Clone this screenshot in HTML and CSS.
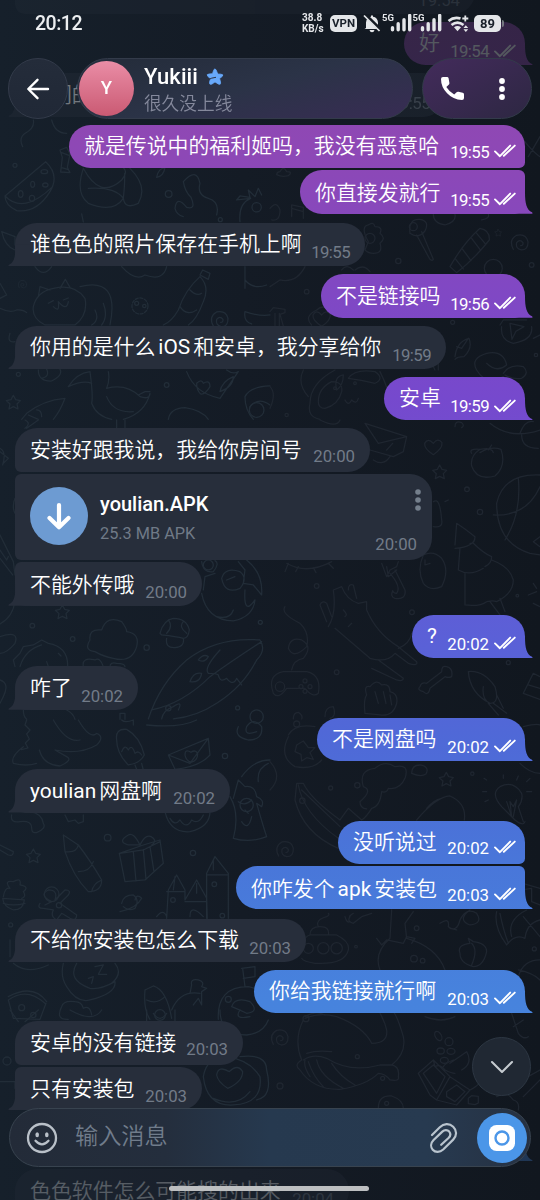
FILE: index.html
```html
<!DOCTYPE html>
<html lang="zh-CN">
<head>
<meta charset="utf-8">
<title>Yukiii</title>
<link rel="stylesheet" href="styles.css">
</head>
<body>
<div class="phone">
<svg class="wallpaper" width="540" height="1200" viewBox="0 0 540 1200" aria-hidden="true">
  <defs>
    <path id="star" d="M0-20 7-7 21-4 11 6 14 21 0 14-13 21-10 6-21-4-7-7Z"/>
    <path id="swirl" d="M-20 18Q-35-10-10-24Q18-30 24-5Q25 20 4 20Q-14 16-10-2Q0-14 9-2Q10 7 2 7"/>
    <path id="heart" d="M0 24Q-28 6-26-10Q-16-28 0-10Q14-28 26-12Q28 6 0 24Z"/>
    <path id="doublecheck" d="M1 7.4 5.9 12.2 16.2 1.6M9.8 11.8 20.8 1.6" fill="none" stroke="currentColor" stroke-width="1.9" stroke-linecap="round" stroke-linejoin="round"/>
  </defs>
  <g class="doodle-left" transform="translate(0 120) scale(.3333)">
    <path d="M100 0Q105 25 75 40Q55 55 68 80M155 0Q165 40 200 40M137 125Q180 165 150 215Q110 280 50 272Q15 255 15 228ZM15 228Q70 285 158 200M180 90l20-8 10 20-8 40 8 16-28-2 5-44zM185 98l22 8M185 143l18 5M250 145Q300 240 365 180Q385 155 370 143M250 145Q225 220 265 250Q340 280 370 235Q375 190 374 160M390 145Q445 200 415 250Q375 270 370 235M265 205Q345 200 370 235M470 172Q475 145 495 143M470 172Q490 170 495 143M550 185Q590 140 600 190Q590 225 625 235Q660 245 650 285M550 185Q555 215 573 232Q590 270 560 262Q530 225 525 265Q530 285 550 290M720 305Q715 250 752 235L710 240 720 228 750 232 745 210 765 230 775 205 785 225M245 282L250 306M5 335L45 350 45 375M5 335Q15 380 45 390M105 440Q130 475 155 440M365 440Q405 485 435 465Q490 485 500 440M100 560Q110 515 160 505Q225 490 255 535Q265 585 225 615H135Q95 595 100 560M115 530L120 500 150 510M180 505L196 478 210 502M240 500Q360 470 330 615M285 570Q300 600 275 615M310 550Q325 590 305 615M160 560Q180 580 175 545Q200 575 205 545M145 550l15-8M190 540l15-6M600 470Q555 510 535 570Q515 605 490 615M600 470Q630 500 610 545Q590 600 565 615M600 465l8-15 22 10-5 18zM570 510Q590 530 605 520M540 560Q560 590 590 570M735 440V505M735 480Q760 510 800 495M735 575Q780 590 810 585M735 575Q730 605 755 612M115 750Q115 785 155 783Q190 765 180 748M140 748Q150 770 125 775M205 800Q230 760 270 755M205 800Q250 780 275 790M270 755Q280 830 275 850Q290 890 335 898M325 755Q330 780 320 805Q380 790 420 830Q450 840 450 820Q435 880 370 898M320 830Q340 880 400 875M415 825l20-10 15 0M560 755Q585 820 660 835L715 755Q700 765 680 750M590 790q15-15 20 0q20-12 20 10q-15 25-28 22q-12-10-12-32M660 815q5-30 40-45q0 30-40 45M30 640Q20 670 45 665M65 898L80 880Q130 840 195 835Q180 875 160 898M85 885l30 13M110 870q15 0 15 20M505 898Q510 865 555 863Q605 870 625 898M735 830Q750 800 810 798M735 830Q735 870 760 898M750 860q25-30 60-5M0 490L20 525 0 535M0 565Q30 580 50 570Q70 568 80 578"/>
    <ellipse cx="133" cy="155" rx="10" ry="6"/><ellipse cx="98" cy="193" rx="6" ry="9"/><ellipse cx="136" cy="195" rx="8" ry="6"/><ellipse cx="62" cy="222" rx="7" ry="10"/><ellipse cx="96" cy="235" rx="8" ry="9"/>
    <circle cx="420" cy="558" r="24" stroke-dasharray="9 5"/><circle cx="410" cy="550" r="6"/><circle cx="433" cy="558" r="5"/>
    <circle cx="45" cy="136" r="6"/><circle cx="506" cy="222" r="10"/><circle cx="770" cy="262" r="14"/><circle cx="661" cy="299" r="6"/><circle cx="55" cy="763" r="6"/><circle cx="500" cy="795" r="7"/><circle cx="770" cy="870" r="22"/>
    <use href="#swirl" x="67" y="494" transform="translate(34 247) scale(.5)"/><use href="#swirl" x="660" y="600"/><use href="#star" x="40" y="846"/>
  </g>
  <g class="doodle-right" transform="translate(270 120) scale(.3333)">
    <path d="M30 155q10-20 20 0q20 0 5 12q-20 5-35-3q0-8 10-9M0 265Q20 240 30 270Q30 305 5 300M65 290V255L100 262V295M65 265l35 10M455 335L490 418Q485 425 478 415L440 345M490 283Q490 310 525 315Q560 305 555 283M635 300Q660 295 655 283M540 440Q580 370 630 325Q660 330 658 360Q610 420 560 458ZM555 415l25 32M578 388l25 34M605 355l26 35M620 340l25 30M285 390l10-25q-25-45 0-50q15-12 20 5q25 0 15 20q20 15 0 30q10 30-20 30q-15 0-25-10M250 450Q230 430 215 450M255 450Q280 430 300 455M0 500L30 480Q80 490 105 440M0 575l10-12 35 5 0 10-15 5 10 35M15 580v38M28 580v38M125 615Q100 590 140 570Q160 550 190 575M690 615L700 600H770M695 620Q690 660 730 670Q790 660 785 620M720 610l42 10-24 14-12 24zM555 710q5-45 42-55q12 30-15 55q-20 0-27 8M560 680l15 5 20-30M100 750Q80 790 115 830M195 750Q120 790 120 850Q110 890 150 898M200 810q-10-40 20-45q0 30-20 45M145 845q0-40 40-60q35 0 30 30q-10 40-50 50q-20 0-20-20M225 840q10 20 20 0q15 15 20-5M235 775q20-30 80-20q30 20 0 35q-40-10-80-15M330 755q30 60 30 95M0 800q20 20 0 65M620 750Q600 715 650 700Q700 690 710 735Q680 760 650 730M620 750Q650 800 700 770M700 760q20-30 60-20q20 20-5 35q-25 5-50-10M480 720l15 30M505 730V750M755 520Q770 560 760 570M790 655l20-10M775 110l35-60M735 25Q780 90 810 110M420 340q-5-45 30-42q30 5 15 35q-20 25-45 7"/>
    <circle cx="430" cy="320" r="12"/><circle cx="300" cy="355" r="15"/><circle cx="670" cy="445" r="27"/><circle cx="110" cy="515" r="7"/><circle cx="385" cy="423" r="8"/><circle cx="785" cy="435" r="7"/><circle cx="50" cy="885" r="5"/><circle cx="798" cy="705" r="5"/><circle cx="548" cy="607" r="6"/><circle cx="195" cy="805" r="4"/><circle cx="255" cy="790" r="4"/>
    <use href="#swirl" x="750" y="370"/><use href="#heart" x="155" y="595"/><use href="#star" x="685" y="338" transform="translate(342 169) scale(.5)"/>
  </g>
  <g class="doodle-left" transform="translate(0 420) scale(.3333)">
    <path d="M75 0Q95 10 75 25M80 25L115 0M350 0V25M375 0V25M0 85Q20 95 8 135M0 95l25 20-15 15M0 345L40 425 45 465M0 390l20 30 5-10M0 415l38 50M45 540Q40 590 0 612M0 650Q60 630 45 670Q20 700 0 700M605 425Q610 460 640 455Q660 430 645 422M740 420Q790 460 785 525L760 495 730 490 735 450 715 425M605 520Q620 600 700 603Q760 590 765 540Q730 590 735 510M650 590Q690 600 700 570M610 510l5-40 30-10M665 475q10-35 55-20q25 20 0 50q-45 20-55-30M680 480l25-10M270 660Q265 625 305 630Q320 585 365 605Q380 625 380 635Q420 640 410 680Q395 730 340 715Q310 710 285 695Q250 690 270 660M250 740Q245 710 285 720Q300 710 310 740M330 740q0-15 20-10q25 0 25 10M45 740L40 720 60 700 70 680 100 675 125 660 145 670Q205 680 203 740M60 740Q75 690 125 675M480 640Q490 600 520 595Q560 595 568 630Q565 655 550 655Q530 650 485 645ZM500 655Q495 685 525 683Q555 680 550 655M505 600Q520 620 500 640M550 605Q535 620 560 640M445 897Q480 790 560 720Q650 650 780 660Q800 690 770 720Q730 800 650 850Q590 890 520 897M455 870Q550 850 630 770Q700 720 785 665M660 690Q610 745 625 760Q650 760 655 765Q660 790 680 775Q700 800 710 775L725 795M485 897Q490 870 520 860Q550 840 535 870M570 785q10-30 35-25q-5 30-35 25M595 720q15-20 30-10q-10 20-30 10M0 780Q30 790 10 830L0 850M70 870Q70 890 80 898M200 870Q220 880 225 898M360 898V880H375V898M45 280Q35 260 45 235M140 725l5 15M175 700l8 8"/>
    <circle cx="505" cy="865" r="8"/><circle cx="625" cy="435" r="15"/><circle cx="97" cy="617" r="7"/><circle cx="218" cy="657" r="7"/><circle cx="440" cy="683" r="8"/><circle cx="781" cy="607" r="6"/><circle cx="713" cy="864" r="6"/><circle cx="770" cy="890" r="20"/><use href="#star" x="187" y="575"/>
  </g>
  <g class="doodle-right" transform="translate(270 420) scale(.3333)">
    <path d="M285 10L410 50 400 95 370 110 300 90M285 10l40 60 85-20M350 90l18-20M310 120Q340 140 360 110M150 0Q200 25 210 0M605 100q-10-15 25-12q35-8 40 10M630 88q-30 20-25 50q15 45 70 30q35-30 18-80q-30-10-63 10M655 90l10-15M555 20q0-20 20-12q10 10 0 15M660 10Q720 60 810 30M755 45q0 40 50 40M750 40q15-40 40-35M810 165Q700 160 680 250Q680 370 780 400L810 405M745 175Q755 280 705 360M670 285Q770 290 810 200M810 350l-20 15 20 15M490 245Q510 230 515 300Q520 325 490 320M525 245l10-5M50 430Q110 465 185 425M55 430l-10 25M85 440l-8 15M130 443l8 15M175 430l15 15M335 430l15 40 10-20 20-10 5-15M350 440l5 30 25-20M360 460Q395 500 380 520Q370 520 368 512Q360 530 375 535Q410 540 405 510L375 450M460 405Q440 450 460 490Q480 515 515 500Q540 450 515 415Q490 390 460 405M465 420l0 15 15-5M555 375L560 310Q590 330 615 350Q615 380 555 385M615 350q0 20-15 20M570 385L565 450Q600 470 640 445M610 370Q640 400 665 410Q665 430 645 440M585 460V555Q630 560 650 545Q670 540 680 545Q730 520 730 480Q720 440 665 420M660 545l30 40M690 535l15 40M175 620Q200 580 190 510L215 500Q230 540 265 550L290 545 290 570Q320 640 385 680L440 725Q445 740 415 730L375 700Q350 730 300 715L195 625M170 605l-20-50Q155 540 170 550L185 590M235 510q0-20 15-15l10 40M325 720l75 55q0 10-20 5l-75-35M385 685Q420 670 425 640M65 750Q70 720 100 715Q130 680 95 660Q60 650 55 685Q70 720 110 680Q120 640 90 610Q30 580 45 560M10 820Q-10 765 40 755H110Q155 765 145 820Q130 835 105 805H50Q25 840 10 820M285 880Q280 840 290 825Q280 795 300 800Q320 775 335 795Q360 790 360 815Q385 820 380 850Q370 890 330 885ZM315 815l10 35M340 815l8 35M360 825l5 30M450 800q5-15 20-10l45-35q0-20 15-15q20 5 15 30q-10 5-20 0l-45 35q-5 25-20 10q-20-5-10-15M595 755Q640 750 675 800Q690 850 660 850Q600 820 595 755M640 800Q635 840 660 850M670 850l40 30M655 850l30 35M680 825l20 40M760 820l30-60 20 10M760 820l50 18M775 795l35 10M70 897q0-20 15-20q15 10 10 20M165 890q0-30 25-30q10 30-10 35M775 525l25-10M790 550l20 10M790 490l10 15M220 570q15 15 5 20M245 610l-10 10"/>
    <circle cx="30" cy="800" r="14"/><circle cx="105" cy="783" r="6"/><circle cx="93" cy="800" r="6"/><circle cx="120" cy="800" r="6"/><circle cx="105" cy="814" r="6"/><circle cx="591" cy="208" r="7"/><circle cx="630" cy="276" r="8"/><circle cx="140" cy="498" r="7"/><circle cx="426" cy="577" r="7"/><circle cx="742" cy="527" r="4"/><circle cx="200" cy="757" r="7"/><circle cx="715" cy="728" r="6"/>
    <use href="#heart" x="490" y="80"/><use href="#star" x="509" y="155"/>
  </g>
  <g class="doodle-left" transform="translate(0 720) scale(.3333)">
    <path d="M80 0l-5 15 15 15-10 12 8 15-12 12 8 15-20 5M70 80Q30 110 40 130Q80 140 110 130M118 90Q130 135 180 138Q220 120 200 110L165 90Q240 105 290 75Q315 50 290 40Q270 60 235 0M160 0Q200 70 240 60M350 60Q345 25 380 28Q420 50 433 105Q420 130 385 135Q350 100 350 60M365 95q10-25 20-5q10-20 20 10q10-10 20 5M405 135l8 20M425 130l5 20M505 105L625 55 630 105Q600 140 525 148ZM505 105L570 130 625 55M555 105q0-20 18-8q15-10 20 5q0 20-20 25q-15-5-18-22M365 0q10 10 35 0v15M440 15Q540 25 590 0M715 20Q700 50 745 60Q790 60 785 20Q760-10 740 20Q730 50 770 35M725 170Q760 120 810 120M775 185q-5-40 30-55M700 235L715 180 735 200Q765 195 770 230Q795 240 785 260L770 250Q790 320 800 350Q750 370 700 355Q720 280 690 230M715 245q20 15 40-5M735 270l10 10M725 305q20 30 30-15M35 285Q30 310 60 305Q95 300 95 325Q95 340 110 338Q140 325 130 310Q125 280 90 275M195 285l10 20 20-5 10 10 15-5v-20M495 275Q510 340 570 335Q630 320 630 275M510 295q15 25 30 5q20 30 35 0q20 15 35-15M190 345L235 375Q270 420 305 480Q305 515 265 515Q220 470 195 395ZM195 395Q230 400 235 375M235 455Q270 455 280 425M275 515Q280 490 305 480M358 400L375 485 435 480 490 430 480 360 430 375ZM360 400L430 390 480 365M400 395l8 88M430 388l8 90M450 380l12 75M420 375q-20-40-35-30q-35 20 0 30zM420 375q20-40 40-20q10 10-5 20M0 375L40 395Q40 410 25 405L0 390M10 530Q15 500 30 505Q10 480 40 485Q65 470 60 495Q90 500 70 515Q80 530 65 535M8 535l65 5Q70 570 40 570Q10 560 8 535M10 550q30 10 65 0M135 555l20-10q-40-20-10-35q30 0 20 30l30-30q20 0 10 15l-25 25 50 35q0 20-20 10l-25-15-15 20q-20-10-10-30l-30-5q-20 0-10-15M365 550q5-25 35-25q20 15 5 40q-20 10-35-5M360 575q50-10 65-40q-15-15-20 5M500 595L505 510 530 465 555 510V540H555L590 480 620 535 622 595M500 515h55M555 545h65M620 595V460L645 410 685 460V595M620 465H685M570 590q0-40 40 0M470 590q20-25 30 0M525 470l-5 40M590 490v30M640 420v30M40 730Q80 765 145 735M30 660l0 50M190 730Q180 770 200 800Q230 850 270 840Q350 820 345 785Q300 810 270 805Q200 780 230 730M285 740l25-5-15 28 25 0M265 775l15-5-5 20M345 730Q370 760 335 790M185 860q5-20 40-15q20 0 25 20q20-10 25 20M185 860q-20 40 20 38M25 830Q100 790 140 845M25 840L40 895 120 898 138 850M25 840Q80 800 135 850M435 810L460 798Q500 810 515 895M435 810Q430 870 450 898M440 840q30 15 55-10M515 870Q540 810 600 820M570 820l5-25q-5-20 20-15q20 5 10 20l15 5-15 10 0 40-10-20-15 20M655 898Q650 800 745 800Q790 810 810 840M725 745L765 740V770L730 775M728 745L735 800M695 860q10-30 55-15q30 30-10 35q-20-10-45-20"/>
    <circle cx="740" cy="255" r="20"/><circle cx="155" cy="523" r="22"/><circle cx="177" cy="556" r="8"/><circle cx="323" cy="353" r="10"/><circle cx="675" cy="108" r="8"/><circle cx="579" cy="399" r="8"/><circle cx="519" cy="540" r="7"/><circle cx="643" cy="493" r="7"/><circle cx="667" cy="587" r="7"/><circle cx="32" cy="615" r="6"/><circle cx="480" cy="885" r="16"/><circle cx="685" cy="838" r="9"/><circle cx="65" cy="863" r="9"/><circle cx="100" cy="885" r="8"/>
    <use href="#star" x="100" y="407"/>
  </g>
  <g class="doodle-right" transform="translate(270 720) scale(.3333)">
    <path d="M0 125Q40 170 0 210M55 50Q25 110 75 140Q130 150 155 120M55 45Q75 10 135 20M80 75l20-12 15 20 20 0-15 15 10 20-20-5-15 10-2-20-18-8zM205 385Q100 340 75 240L80 190 100 190Q120 235 210 300L235 265 275 300M95 210L210 320M85 195Q100 280 205 355M270 245Q310 210 280 200Q265 150 315 145Q345 120 375 140Q420 130 405 175Q390 210 355 205Q350 220 335 215Q330 260 305 265Q290 290 275 300M270 245q0 20 20 22M425 160q0-25 25-25q30 5 18 27q-15 10-43-2M440 300Q500 230 540 228Q590 250 583 300M515 235Q490 240 470 265M735 300L695 260Q660 220 690 200Q730 180 755 220Q760 240 745 260L760 305M710 245l15 45-5-45 10 15 10-20-10 50M770 185l10-10M770 215h15M650 180l-8-5M650 215h-12M655 240l-10 5M700 175v-10M740 180l5-12M735 300q25 20 30 5M760 20Q800 10 810 15M750 130Q780 160 810 160M105 660q0-10 15-15h80q40 20 35 45q-10 45-100 40q-35-5-40-15M120 645q0-25 30-25q30 0 25 25M145 620q-10-20 25-30q10-5 5-10M250 580q-15 10-10 10q-10 15 10 20l25-20 30-10M225 590q5 20 15 15M365 570L360 655Q310 700 330 750M430 575L405 610 410 655Q500 680 525 750M320 655L335 675 350 660 400 670 410 650 435 655 425 670M510 610Q540 590 535 620Q560 640 570 600Q590 560 620 580Q640 610 600 615Q560 600 600 570M540 625l20 5M570 700Q560 675 600 670L595 655 610 665Q650 670 650 695Q640 740 610 740Q570 730 570 700M605 670q20 20 0 65M680 575Q670 620 710 675Q735 640 765 655Q770 610 810 600M690 580Q700 630 715 670M770 570Q710 600 725 650M760 590L810 650M740 485l70 20M745 770Q760 720 810 720M745 750Q790 760 810 780M105 890q30-20 60-5M755 490v20l30-5v40l25 10"/>
    <circle cx="115" cy="685" r="15"/><circle cx="160" cy="685" r="17"/><circle cx="200" cy="685" r="17"/><circle cx="80" cy="12" r="9"/><circle cx="262" cy="196" r="8"/><circle cx="182" cy="204" r="6"/><circle cx="97" cy="242" r="8"/><circle cx="607" cy="161" r="5"/><circle cx="432" cy="716" r="10"/><circle cx="440" cy="625" r="7"/><circle cx="458" cy="722" r="7"/><circle cx="258" cy="680" r="4"/><circle cx="793" cy="687" r="6"/>
    <use href="#star" x="529" y="177"/><use href="#swirl" x="46" y="390"/>
  </g>
  <g class="doodle-left" transform="translate(0 1010) scale(.3333)">
    <path d="M30 0L55 35M75 35L115 0M210 0Q280 40 305 0M440 0v35M525 0v35M460 10q20 30 40 0M660 0Q660 75 740 75Q790 70 805 30M720 0q-20 30 30 20M610 200Q620 140 680 140Q750 150 780 200Q790 280 700 285Q620 290 610 200M720 140Q800 130 800 180Q820 260 770 270M640 265q70 30 110-20M650 195q5-30 38-10q25-25 40 0q0 30-45 50q-30-20-33-40M0 215H45V235"/><circle cx="21" cy="153" r="12"/>
  </g>
  <g class="doodle-right" transform="translate(270 1010) scale(.3333)">
    <path d="M100 30Q70 90 95 150Q70 165 90 180Q130 240 210 238Q290 225 325 190Q345 190 360 210Q390 215 385 200Q390 170 365 165Q410 130 400 80Q380 10 365 0M105 25Q150 5 200 20Q280 50 305 100Q355 100 350 60Q345 35 325 0M100 150Q130 130 170 145Q240 190 330 165L365 165M115 155Q130 200 160 230M140 150Q150 200 220 235M185 160Q210 200 255 225M105 150Q100 170 120 200M110 130Q140 120 185 125M445 190L490 150 540 200 500 270 480 255ZM460 190L490 165 525 200 500 250ZM540 200L600 240 560 285 500 270M530 245l30-20 25 20-30 30-25-15ZM540 160L590 125Q610 160 575 180M600 240Q640 220 620 210M325 295Q325 255 365 258Q400 270 400 295M465 20q50 20 90 0M725 10l20 60q15 20 30 10M730 50l30-20M680 260q30-20 50 10q20 5 15 30M720 230L810 180M760 260l50-50M595 265l10-8 20 2 0 20-10 5-20-3zM520 170q5-10 30-20M490 150l5 20q15-10 30 10q20 10 30 10"/>
    <ellipse cx="505" cy="78" rx="15" ry="9" transform="rotate(60 505 78)"/><circle cx="537" cy="95" r="12"/><ellipse cx="512" cy="123" rx="11" ry="9"/><ellipse cx="543" cy="124" rx="12" ry="9"/><ellipse cx="523" cy="151" rx="12" ry="9"/><circle cx="30" cy="228" r="9"/><circle cx="262" cy="140" r="6"/><circle cx="338" cy="205" r="6"/><circle cx="108" cy="26" r="9"/><circle cx="350" cy="280" r="6"/>
    <use href="#swirl" x="30" y="85"/>
  </g>
</svg>

<main class="chat">
  <div class="row in above"><div class="bubble single"><span class="time">19:54</span></div></div>
  <div class="row out faded"><div class="bubble single w121"><span class="text">好</span><span class="time t19">19:54</span><svg class="ticks" viewBox="0 0 22 14"><use href="#doublecheck"/></svg><i class="tail"></i></div></div>
  <div class="row in faded dim"><div class="bubble single w430"><span class="text">你们的</span><span class="time t19">19:55</span><i class="tail"></i></div></div>
  <div class="row out"><div class="bubble first w456"><span class="text">就是传说中的福利姬吗，我没有恶意哈</span><span class="time t19">19:55</span><svg class="ticks" viewBox="0 0 22 14"><use href="#doublecheck"/></svg></div></div>
  <div class="row out joined"><div class="bubble last w225"><span class="text">你直接发就行</span><span class="time t19">19:55</span><svg class="ticks" viewBox="0 0 22 14"><use href="#doublecheck"/></svg><i class="tail"></i></div></div>
  <div class="row in spaced"><div class="bubble single w350"><span class="text">谁色色的照片保存在手机上啊</span><span class="time t19">19:55</span><i class="tail"></i></div></div>
  <div class="row out"><div class="bubble single w204"><span class="text">不是链接吗</span><span class="time t19">19:56</span><svg class="ticks" viewBox="0 0 22 14"><use href="#doublecheck"/></svg><i class="tail"></i></div></div>
  <div class="row in"><div class="bubble single w431"><span class="text">你用的是什么<span class="latin">iOS</span>和安卓，我分享给你</span><span class="time t19">19:59</span><i class="tail"></i></div></div>
  <div class="row out"><div class="bubble single w141"><span class="text">安卓</span><span class="time t19">19:59</span><svg class="ticks" viewBox="0 0 22 14"><use href="#doublecheck"/></svg><i class="tail"></i></div></div>
  <div class="row in"><div class="bubble first w355"><span class="text">安装好跟我说，我给你房间号</span><span class="time">20:00</span></div></div>
  <div class="row in joined"><div class="bubble file">
    <svg class="download" viewBox="0 0 58 58"><circle cx="29" cy="29" r="29" fill="#6d9bd2"/><path d="M29 18V40M19.5 31 29 40.3 38.5 31" fill="none" stroke="#fff" stroke-width="4.2" stroke-linecap="round" stroke-linejoin="round"/></svg>
    <div class="file-info"><div class="file-name">youlian.APK</div><div class="file-size">25.3 MB APK</div></div>
    <div class="file-side"><svg class="file-dots" viewBox="0 0 6 22"><circle cx="3" cy="3" r="2.8"/><circle cx="3" cy="11" r="2.8"/><circle cx="3" cy="19" r="2.8"/></svg><span class="time">20:00</span></div>
  </div></div>
  <div class="row in joined"><div class="bubble last w187"><span class="text">不能外传哦</span><span class="time">20:00</span><i class="tail"></i></div></div>
  <div class="row out spaced"><div class="bubble single w113"><span class="text"><span class="latin flush">?</span></span><span class="time">20:02</span><svg class="ticks" viewBox="0 0 22 14"><use href="#doublecheck"/></svg><i class="tail"></i></div></div>
  <div class="row in"><div class="bubble single w123"><span class="text">咋了</span><span class="time">20:02</span><i class="tail"></i></div></div>
  <div class="row out"><div class="bubble single w208"><span class="text">不是网盘吗</span><span class="time">20:02</span><svg class="ticks" viewBox="0 0 22 14"><use href="#doublecheck"/></svg><i class="tail"></i></div></div>
  <div class="row in"><div class="bubble single w215"><span class="text"><span class="latin flush">youlian</span>网盘啊</span><span class="time">20:02</span><i class="tail"></i></div></div>
  <div class="row out"><div class="bubble first w187"><span class="text">没听说过</span><span class="time">20:02</span><svg class="ticks" viewBox="0 0 22 14"><use href="#doublecheck"/></svg></div></div>
  <div class="row out joined"><div class="bubble last w289"><span class="text">你咋发个<span class="latin">apk</span>安装包</span><span class="time">20:03</span><svg class="ticks" viewBox="0 0 22 14"><use href="#doublecheck"/></svg><i class="tail"></i></div></div>
  <div class="row in spaced"><div class="bubble single w291"><span class="text">不给你安装包怎么下载</span><span class="time">20:03</span><i class="tail"></i></div></div>
  <div class="row out"><div class="bubble single w271"><span class="text">你给我链接就行啊</span><span class="time">20:03</span><svg class="ticks" viewBox="0 0 22 14"><use href="#doublecheck"/></svg><i class="tail"></i></div></div>
  <div class="row in"><div class="bubble first w228"><span class="text">安卓的没有链接</span><span class="time">20:03</span></div></div>
  <div class="row in joined"><div class="bubble last w187"><span class="text">只有安装包</span><span class="time">20:03</span><i class="tail"></i></div></div>
  <div class="row out faded"><div class="bubble single w330"><i class="tail"></i></div></div>
  <div class="row in faded"><div class="bubble single w334"><span class="text">色色软件怎么可能搜的出来</span><span class="time">20:04</span></div></div>
</main>

<div class="top">
  <div class="status">
    <span class="clock">20:12</span>
    <div class="status-icons">
      <div class="speed"><span>38.8</span><span>KB/s</span></div>
      <span class="vpn">VPN</span>
      <svg width="18" height="19" viewBox="0 0 18 19"><path d="M3 14V8.5Q3.500 3.300 8 2.800V1.400H10V2.800Q14.500 3.300 15 8.500V13L16.500 15H1.500ZM6.500 16H11.500Q11 18.200 9 18.200T6.500 16" fill="#e4e6e9"/><path d="M2.200 .8 18 16.300" stroke="#151b23" stroke-width="3.600"/><path d="M1 1.500 16.500 17" stroke="#e4e6e9" stroke-width="1.700"/></svg>
      <div class="signal"><span>5G</span><svg width="22" height="18" viewBox="0 0 22 18"><path d="M2.500 15.800V13.800M8.200 15.800V9.800M14 15.800V5.800M19.700 15.800V1.500" stroke="#e4e6e9" stroke-width="3.400" stroke-linecap="round"/></svg></div>
      <div class="signal"><span>5G</span><svg width="22" height="18" viewBox="0 0 22 18"><path d="M2.500 15.800V13.800M8.200 15.800V9.800M14 15.800V5.800M19.700 15.800V1.500" stroke="#e4e6e9" stroke-width="3.400" stroke-linecap="round"/></svg></div>
      <svg class="wifi" width="22" height="19" viewBox="0 0 22 19"><path d="M1.500 7Q7 2.400 13.500 4.500M4.500 11Q10.500 6.200 16.500 11" fill="none" stroke="#e4e6e9" stroke-width="2.600"/><path d="M7 13.300Q10.500 10.500 14 13.300L10.500 17.300ZM16.500 14 18.800 11.300 21.200 14ZM16.500 15.300 18.800 18 21.200 15.300Z" fill="#e4e6e9"/><path d="M18.300 1.500V7.500M15.300 4.500H21.300" stroke="#e4e6e9" stroke-width="1.800"/></svg>
      <span class="battery">89</span>
    </div>
  </div>
  <header class="header">
    <div class="glass back"><svg width="24" height="24" viewBox="0 0 24 24"><path d="M22 12H2.500M11.500 2.800 2.300 12 11.500 21.200" fill="none" stroke="#fff" stroke-width="2.400" stroke-linecap="round" stroke-linejoin="round"/></svg></div>
    <div class="glass title">
      <div class="avatar">Y</div>
      <div class="names">
        <div class="name">Yukiii<svg width="18" height="18" viewBox="0 0 18 18"><path d="M8.800 1Q10 1 10.700 3.300L11.700 6 15 6.200Q18.200 6.500 16 8.600L13.600 10.500 14.500 14Q15.100 17.300 12.300 16L9 13.900 6 16Q3 17.200 3.600 14.100L4.500 10.700 2 8.500Q-.1 6.300 3 6L6.500 5.700 7.500 2.700Q8 1 8.800 1Z" fill="#67a8fa" stroke="#67a8fa" stroke-width=".8"/><path d="M2 11.800Q5.500 9.700 10 9.300" fill="none" stroke="#2a3144" stroke-width="1"/></svg></div>
        <div class="seen">很久没上线</div>
      </div>
    </div>
    <div class="glass actions">
      <svg width="25" height="25" viewBox="0 0 25 25"><path d="M3 1H7Q8.300 1 8.600 2.300L9.400 7Q9.500 8 8.700 8.800L6.300 11Q9.500 16 14.200 18.600L16.600 16.300Q17.400 15.500 18.400 15.800L22.700 16.700Q24 17.100 24 18.400V22Q24 24 22 24Q13 23.600 7.100 17.300Q1 11 1 3Q1 1 3 1Z" fill="#fff"/></svg>
      <svg width="6" height="22" viewBox="0 0 6 22"><g fill="#fff"><circle cx="3" cy="3" r="2.900"/><circle cx="3" cy="11" r="2.900"/><circle cx="3" cy="19" r="2.900"/></g></svg>
    </div>
  </header>
</div>

<div class="bottom">
  <div class="scroll-down"><svg width="24" height="14" viewBox="0 0 24 14"><path d="M2 2 12 12 22 2" fill="none" stroke="#c5cbd0" stroke-width="2.100" stroke-linecap="round" stroke-linejoin="round"/></svg></div>
  <div class="composer">
    <svg class="smile" width="32" height="32" viewBox="0 0 32 32"><circle cx="16" cy="16" r="14" fill="none" stroke="#b9c0c8" stroke-width="2.300"/><path d="M9.500 18.800Q16 25.800 22.500 18.800" fill="none" stroke="#b9c0c8" stroke-width="2.300" stroke-linecap="round"/><g fill="#b9c0c8"><ellipse cx="11.200" cy="12.800" rx="1.800" ry="2.500"/><ellipse cx="20.800" cy="12.800" rx="1.800" ry="2.500"/></g></svg>
    <span class="placeholder">输入消息</span>
    <svg class="clip" width="28" height="32" viewBox="0 0 28 32"><path d="M2 13 9.800 5.300C13.800 1.300 19.300 1 23.200 4.700C27.200 8.600 26.800 14 23.200 17.600L13.200 27.500C9.800 30.700 5.200 30.500 2.700 27.700C.3 24.900 .8 20.800 3.600 18L12.300 9.600C14.600 7.500 17.500 7.700 19.200 9.600C20.800 11.500 20.500 14 18.500 16L11.200 22.800" fill="none" stroke="#b9c4ce" stroke-width="2.200" stroke-linecap="round"/></svg>
    <svg class="camera" width="50" height="50" viewBox="0 0 50 50"><circle cx="25" cy="25" r="25" fill="#4b96e8"/><rect x="12" y="12" width="26" height="26" rx="7.500" fill="#fff"/><circle cx="25" cy="25" r="6.500" fill="none" stroke="#4b96e8" stroke-width="2.400"/></svg>
  </div>
  <div class="home"></div>
</div>
</div>
</body>
</html>
```
FILE: styles.css
```css
* { box-sizing: border-box; }
body {
  margin: 0;
  font-family: Roboto, "Noto Sans CJK SC", sans-serif;
  color: #fff;
}
.phone {
  position: relative;
  width: 540px;
  height: 1200px;
  overflow: hidden;
  background: linear-gradient(90deg, #16202b 0%, #141b25 45%, #11171f 100%);
}
.wallpaper { position: absolute; left: 0; top: 0; }
.wallpaper g { fill: none; stroke-width: 3.800; stroke-linecap: round; stroke-linejoin: round; }
.doodle-left { stroke: #222d38; }
.doodle-right { stroke: #1f2630; }

/* messages */
.chat {
  position: relative;
  display: flex;
  flex-direction: column;
  gap: 8px;
  margin-top: -29.300px;
}
.row { display: flex; padding: 0 15px; }
.out { justify-content: flex-end; }
.joined { margin-top: -6px; }
.spaced { margin-top: 1.200px; }
.faded { opacity: .28; }
.dim { opacity: .4; }
.above { opacity: .25; }
.above .bubble { width: 460px; justify-content: flex-end; }
.bubble {
  position: relative;
  display: flex;
  align-items: flex-start;
  height: 43.400px;
  padding: 0 14px 0 15px;
  border-radius: 22px;
  background: #272e3b;
  white-space: nowrap;
}
.out .bubble, .out .tail {
  background: linear-gradient(180deg, #9447ad 0, #8e48b5 145px, #8048c4 296px, #7649cd 398px, #5b60d7 637px, #4f69d7 740px, #4976d9 860px, #4783dd 1000px, #4688df 1200px) fixed;
}
.out .bubble { padding-right: 9px; }
.in .single { border-bottom-left-radius: 10px; }
.out .single { border-bottom-right-radius: 10px; }
.in .first { border-bottom-left-radius: 6px; }
.out .first { border-bottom-right-radius: 6px; }
.in .last { border-top-left-radius: 6px; border-bottom-left-radius: 10px; }
.out .last { border-top-right-radius: 6px; border-bottom-right-radius: 10px; }
.tail {
  position: absolute;
  right: -8px;
  bottom: 0;
  width: 22px;
  height: 22px;
  clip-path: path("M0 0H14C14 12 15.500 18 21 20.500Q22.500 22 20 22H0Z");
}
.in .tail {
  right: auto;
  left: -7px;
  background: #272e3b;
  clip-path: path("M22 0H7.500C7.500 12 6.500 18 1 20.500Q-.5 22 2 22H22Z");
}
.text {
  position: relative;
  z-index: 1;
  margin-top: 6.400px;
  font-size: 20.900px;
  font-weight: 350;
  line-height: 30px;
}
.last .text { margin-top: 7.800px; }
.latin { margin: 0 3px; font-weight: 400; }
.flush { margin-left: 0; }
.time {
  position: relative;
  z-index: 1;
  margin: 19.300px 0 0 auto;
  font-size: 16.800px;
  font-weight: 400;
  line-height: 20px;
  color: #727b88;
}
.first .time { margin-top: 17.300px; }
.out .time { color: #fff; }
.in .time { left: -1px; }
.t19 { letter-spacing: -.6px; }
.ticks {
  position: relative;
  z-index: 1;
  flex: none;
  width: 22px;
  height: 14px;
  margin: 21.500px 0 0 5px;
  color: #fff;
}
.first .ticks { margin-top: 19.500px; }
.w113 { width: 113px; }
.w121 { width: 121px; }
.w123 { width: 123px; }
.w141 { width: 141px; }
.w187 { width: 187px; }
.w204 { width: 204px; }
.w208 { width: 208px; }
.w215 { width: 215px; }
.w225 { width: 225px; }
.w228 { width: 228px; }
.w271 { width: 271px; }
.w289 { width: 289px; }
.w291 { width: 291px; }
.w330 { width: 330px; }
.w334 { width: 334px; }
.w350 { width: 350px; }
.w355 { width: 355px; }
.w430 { width: 430px; }
.w431 { width: 431px; }
.w456 { width: 456px; }

.file {
  width: 417px;
  height: 86.600px;
  padding: 13px 10px 0 15px;
  border-radius: 6px 22px 22px 6px;
}
.download { width: 58px; height: 58px; }
.file-info { margin-left: 12px; }
.file-name { margin-top: 4px; font-size: 20px; font-weight: 500; line-height: 26px; }
.file-size { margin-top: 7px; font-size: 16.300px; line-height: 20px; color: #707a87; }
.file-side {
  display: flex;
  flex-direction: column;
  align-items: flex-end;
  margin-left: auto;
}
.file-dots { width: 6px; height: 22px; margin: 2px 1px 0 0; fill: #747f8c; }
.file .time { left: 0; margin: 23.500px 5px 0 0; }

/* status bar and header */
.top {
  position: absolute;
  left: 0;
  top: 0;
  width: 540px;
  height: 119px;
}
.status {
  display: flex;
  justify-content: space-between;
  align-items: center;
  height: 46px;
  padding: 0 39px 0 35px;
}
.clock { font-size: 19.500px; font-weight: 500; letter-spacing: -.5px; color: #eceef0; }
.status-icons { display: flex; align-items: center; color: #e4e6e9; }
.speed {
  display: flex;
  flex-direction: column;
  width: 22px;
  margin-right: 6px;
  font-size: 10px;
  font-weight: 700;
  line-height: 11px;
}
.vpn {
  width: 27px;
  height: 17px;
  margin-right: 6px;
  border-radius: 5px;
  background: #e4e6e9;
  color: #19202a;
  font-size: 11.500px;
  font-weight: 700;
  line-height: 17px;
  text-align: center;
}
.signal { position: relative; height: 18px; padding-left: 7.500px; margin-left: 1px; }
.signal svg { display: block; }
.signal span {
  position: absolute;
  left: 0;
  top: -1px;
  font-size: 9.500px;
  font-weight: 700;
  line-height: 10px;
}
.wifi { margin: 0 5px 0 5px; }
.battery {
  position: relative;
  width: 27px;
  height: 17px;
  border-radius: 5px;
  background: #e4e6e9;
  color: #19202a;
  font-size: 13px;
  font-weight: 700;
  line-height: 17px;
  text-align: center;
}
.battery::after {
  content: "";
  position: absolute;
  right: -3px;
  top: 5px;
  width: 2px;
  height: 7px;
  border-radius: 0 2px 2px 0;
  background: #747780;
}
.header { display: flex; gap: 9px; margin-top: 12px; padding: 0 8px; }
.glass {
  display: flex;
  align-items: center;
  height: 61px;
  border: 1px solid #333b4a;
  border-radius: 31px;
}
.back { width: 60px; justify-content: center; background: linear-gradient(#242c3a, #202836); }
.title {
  width: 337px;
  background: linear-gradient(165deg, #252d3c 10%, #2b3347 50%, #382c54 100%);
}
.avatar {
  width: 55px;
  height: 55px;
  margin-left: 1px;
  border-radius: 50%;
  background: linear-gradient(#ea8da6, #ca5a73);
  font-size: 18.500px;
  font-weight: 500;
  line-height: 55px;
  text-align: center;
}
.names { margin: 2px 0 0 10px; }
.name {
  display: flex;
  align-items: center;
  gap: 8px;
  font-size: 22px;
  font-weight: 500;
  letter-spacing: .1px;
  line-height: 28px;
}
.seen { font-size: 17.700px; font-weight: 350; line-height: 26px; color: #85899c; }
.actions {
  width: 110px;
  justify-content: space-between;
  padding: 0 26px 0 17px;
  background: linear-gradient(150deg, #432b5b, #38294f 50%, #2d2742);
}

/* composer */
.bottom {
  position: absolute;
  left: 0;
  bottom: 0;
  width: 540px;
  display: flex;
  flex-direction: column;
}
.scroll-down {
  display: flex;
  align-items: center;
  justify-content: center;
  width: 59px;
  height: 59px;
  margin: 0 9px 12px auto;
  border: 1px solid #2d3743;
  border-radius: 50%;
  background: #202833;
}
.composer {
  display: flex;
  align-items: center;
  height: 59px;
  margin: 0 9px;
  padding: 0 3px 0 16px;
  border: 1px solid #38434f;
  border-radius: 30px;
  background: linear-gradient(90deg, #232b38 0%, #242e3d 30%, #26394f 50%, #273a50 80%, #263142 100%);
}
.placeholder { margin: -4px 0 0 17px; font-size: 23.200px; font-weight: 350; line-height: 34px; color: #707c8b; }
.clip { margin-left: auto; }
.camera { margin-left: 19px; }
.home {
  width: 200px;
  height: 5px;
  margin: 18.500px auto 9.500px 169px;
  border-radius: 3px;
  background: #bdbfc1;
}
```
